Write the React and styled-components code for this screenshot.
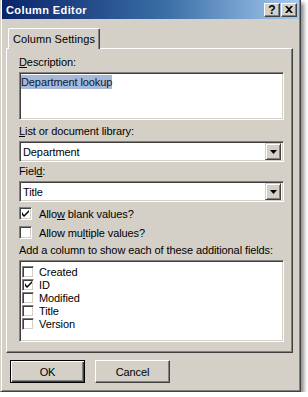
import React from "react";
import styled, { createGlobalStyle } from "styled-components";

const GlobalStyle = createGlobalStyle`
  html, body {
    margin: 0;
    padding: 0;
    background: #ffffff;
  }
  * {
    box-sizing: border-box;
  }
  body {
    font-family: "Liberation Sans", Arial, sans-serif;
    font-size: 11px;
    letter-spacing: -0.1px;
    color: #000;
  }
`;

const Window = styled.div`
  width: 301px;
  height: 392px;
  background: #d4d0c8;
  border: 1px solid;
  border-top-width: 0;
  border-color: #d4d0c8 #404040 #404040 #d4d0c8;
  box-shadow: inset 1px 0 #fff, inset -1px -1px #808080,
    3px 3px 4px rgba(0, 0, 0, 0.45);
  padding: 0 1px 1px 1px;
  display: flex;
  flex-direction: column;
`;

const TitleBar = styled.div`
  height: 19px;
  background: linear-gradient(to right, #0a246a 0%, #3a6ea5 55%, #a6caf0 100%);
  display: flex;
  align-items: center;
  padding: 0 2px 0 4px;
`;

const Title = styled.div`
  flex: 1;
  color: #fff;
  font-weight: bold;
  font-size: 11px;
  letter-spacing: 0.4px;
`;

const CaptionButton = styled.div`
  width: 16px;
  height: 14px;
  margin-left: ${(p) => p.$ml || 0}px;
  background: #d4d0c8;
  border: 1px solid;
  border-color: #fff #404040 #404040 #fff;
  box-shadow: inset -1px -1px #808080;
  display: flex;
  align-items: center;
  justify-content: center;
  font-weight: bold;
  font-size: 12px;
  line-height: 1;
  letter-spacing: 0;
`;

const Body = styled.div`
  flex: 1;
  display: flex;
  flex-direction: column;
  padding: 9px 6px 0 4px;
`;

const TabStrip = styled.div`
  display: flex;
  height: 20px;
  padding-left: 2px;
  position: relative;
  z-index: 1;
`;

const Tab = styled.div`
  width: 92px;
  height: 21px;
  background: #d4d0c8;
  border-top: 1px solid #fff;
  border-left: 1px solid #fff;
  border-right: 1px solid #404040;
  border-radius: 2px 2px 0 0;
  box-shadow: inset -1px 0 #808080;
  display: flex;
  align-items: center;
  justify-content: center;
  padding-bottom: 1px;
  letter-spacing: 0.1px;
`;

const Panel = styled.div`
  height: 305px;
  border: 1px solid;
  border-color: #fff #404040 #404040 #fff;
  box-shadow: inset -1px -1px #808080;
  display: flex;
  flex-direction: column;
  padding: 7px 8px 0 12px;
`;

const Label = styled.div`
  line-height: 13px;
  height: 13px;
  margin-top: ${(p) => p.$mt || 0}px;
  margin-bottom: 3px;
  white-space: nowrap;
`;

const Key = styled.span`
  text-decoration: underline;
`;

const Sunken = styled.div`
  background: #fff;
  border: 1px solid;
  border-color: #808080 #fff #fff #808080;
  box-shadow: inset 1px 1px #404040, inset -1px -1px #d4d0c8;
`;

const TextArea = styled(Sunken)`
  height: 48px;
  padding: 3px 1px;
  line-height: 13px;
`;

const Selected = styled.span`
  background: #a8b9d8;
  color: #0b1a3c;
  padding: 1px 0;
`;

const Select = styled(Sunken)`
  height: 21px;
  display: flex;
  align-items: center;
  padding: 0 2px 0 3px;
`;

const SelectValue = styled.div`
  flex: 1;
`;

const DropButton = styled.div`
  width: 16px;
  height: 17px;
  background: #d4d0c8;
  border: 1px solid;
  border-color: #d4d0c8 #404040 #404040 #d4d0c8;
  box-shadow: inset 1px 1px #fff, inset -1px -1px #808080;
  display: flex;
  align-items: center;
  justify-content: center;
`;

const CheckRow = styled.div`
  display: flex;
  align-items: center;
  height: 13px;
  margin-top: ${(p) => p.$mt || 0}px;
  gap: 7px;
`;

const Box = styled.div`
  width: ${(p) => p.$size}px;
  height: ${(p) => p.$size}px;
  flex: none;
  background: #fff;
  border: 1px solid;
  border-color: #808080 #fff #fff #808080;
  box-shadow: inset 1px 1px #404040, inset -1px -1px #d4d0c8;
  display: flex;
  align-items: center;
  justify-content: center;
`;

const ListBox = styled(Sunken)`
  height: 82px;
  padding: 4px 2px;
  display: flex;
  flex-direction: column;
`;

const ListItem = styled.div`
  display: flex;
  align-items: center;
  height: 13px;
  gap: 5px;
`;

const ButtonRow = styled.div`
  display: flex;
  gap: 10px;
  padding: 7px 0 0 4px;
`;

const Button = styled.div`
  width: 75px;
  height: 23px;
  background: #d4d0c8;
  border: 1px solid;
  border-color: ${(p) =>
    p.$default ? "#000" : "#fff #404040 #404040 #fff"};
  box-shadow: ${(p) =>
    p.$default
      ? "inset 1px 1px #fff, inset -1px -1px #404040, inset -2px -2px #808080"
      : "inset -1px -1px #808080"};
  display: flex;
  align-items: center;
  justify-content: center;
`;

const Check = () => (
  <svg width="7" height="7" viewBox="0 0 7 7">
    <path d="M0 2v3l2 2 5-5V-0L2 5z" fill="#000" />
  </svg>
);

const Arrow = () => (
  <svg width="7" height="4" viewBox="0 0 7 4">
    <path d="M0 0h7L3.5 4z" fill="#000" />
  </svg>
);

const Close = () => (
  <svg width="8" height="7" viewBox="0 0 8 7">
    <path
      d="M0 0h2l2 2 2-2h2L5 3.5 8 7H6L4 5 2 7H0l3-3.5z"
      fill="#000"
    />
  </svg>
);

const fields = [
  { name: "Created", checked: false },
  { name: "ID", checked: true },
  { name: "Modified", checked: false },
  { name: "Title", checked: false },
  { name: "Version", checked: false },
];

const Combo = ({ value }) => (
  <Select>
    <SelectValue>{value}</SelectValue>
    <DropButton>
      <Arrow />
    </DropButton>
  </Select>
);

export default function App() {
  return (
    <>
      <GlobalStyle />
      <Window>
        <TitleBar>
          <Title>Column Editor</Title>
          <CaptionButton>?</CaptionButton>
          <CaptionButton $ml={1}>
            <Close />
          </CaptionButton>
        </TitleBar>
        <Body>
          <TabStrip>
            <Tab>Column Settings</Tab>
          </TabStrip>
          <Panel>
            <Label>
              <Key>D</Key>escription:
            </Label>
            <TextArea>
              <Selected>Department lookup</Selected>
            </TextArea>
            <Label $mt={5}>
              <Key>L</Key>ist or document library:
            </Label>
            <Combo value="Department" />
            <Label $mt={3}>
              Fiel<Key>d</Key>:
            </Label>
            <Combo value="Title" />
            <CheckRow $mt={5}>
              <Box $size={13}>
                <Check />
              </Box>
              <span>
                Allo<Key>w</Key> blank values?
              </span>
            </CheckRow>
            <CheckRow $mt={6}>
              <Box $size={13} />
              <span>
                Allow mu<Key>l</Key>tiple values?
              </span>
            </CheckRow>
            <Label $mt={5}>
              Add a column to show each of these additional fields:
            </Label>
            <ListBox>
              {fields.map((f) => (
                <ListItem key={f.name}>
                  <Box $size={12}>{f.checked && <Check />}</Box>
                  <span>{f.name}</span>
                </ListItem>
              ))}
            </ListBox>
          </Panel>
          <ButtonRow>
            <Button $default>OK</Button>
            <Button>Cancel</Button>
          </ButtonRow>
        </Body>
      </Window>
    </>
  );
}
